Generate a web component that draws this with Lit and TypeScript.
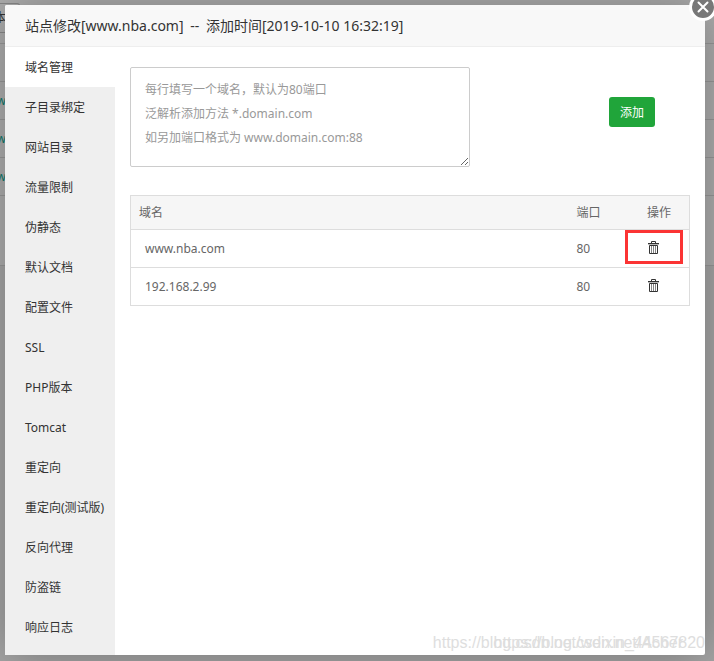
import { LitElement, html, css, svg } from "lit";
import { customElement, state } from "lit/decorators.js";

const TABS = [
  "域名管理", "子目录绑定", "网站目录", "流量限制", "伪静态", "默认文档", "配置文件", "SSL",
  "PHP版本", "Tomcat", "重定向", "重定向(测试版)", "反向代理", "防盗链", "响应日志",
];

const DOMAINS = [
  { name: "www.nba.com", port: 80, marked: true },
  { name: "192.168.2.99", port: 80, marked: false },
];

const trash = svg`<svg width="11" height="13" viewBox="0 0 11 13" fill="none" stroke="currentColor" aria-hidden="true">
  <path d="M3.5 2V.5h4V2M0 2.5h11" />
  <path d="M0 3.5h11" opacity=".35" />
  <path d="M1.5 4.5h8v8h-8z" />
  <path d="M3.5 5v7M5.5 5v7M7.5 5v7" opacity=".6" />
</svg>`;

@customElement("app-root")
export class AppRoot extends LitElement {
  @state() private active = 0;

  static styles = css`
    :host {
      display: block;
      position: relative;
      box-sizing: border-box;
      min-height: 100vh;
      padding: 5px 9px 6px 5px;
      overflow: hidden;
      background: #a6a6a6;
      color: #333;
      font: 12px/20px "Noto Sans", "Noto Sans CJK SC", sans-serif;
    }
    * { box-sizing: border-box; }
    button { font: inherit; cursor: pointer; }
    .behind { position: absolute; inset: 0; color: #0c7a6c; }
    .sheet { background: #aeaeae; }
    .bar { height: 44px; padding-top: 3px; border-bottom: 1px solid #989898; }
    .site-type { width: 20px; height: 30px; border: 1px solid #888; border-left: 0; border-radius: 0 3px 3px 0; line-height: 28px; color: #333; }
    .site-type span, .line span { display: flex; justify-content: flex-end; width: 6px; }
    .line { height: 38px; border-bottom: 1px solid #989898; line-height: 38px; }
    .foot { height: 70px; border-bottom: 1px solid #989898; }
    .dialog {
      position: relative;
      display: flex;
      flex-direction: column;
      min-height: calc(100vh - 11px);
      border-radius: 2px;
      background: #fff;
      box-shadow: 1px 1px 50px rgba(0, 0, 0, 0.3);
    }
    .title {
      margin: 0;
      height: 42px;
      padding: 0 20px;
      border-bottom: 1px solid #eee;
      border-radius: 2px 2px 0 0;
      background: #f8f8f8;
      font-size: 14px;
      font-weight: 400;
      line-height: 42px;
    }
    .dash { margin: 0 3px; }
    .close {
      position: absolute;
      top: -12px;
      right: -12px;
      width: 28px;
      height: 28px;
      padding: 0;
      border: 3px solid #fff;
      border-radius: 50%;
      background: #787878;
      color: #fff;
    }
    .close svg { display: block; margin: auto; }
    .body { display: flex; flex: 1; }
    .tabs { width: 110px; flex: none; background: #efefef; }
    .tab {
      display: block;
      width: 100%;
      height: 40px;
      padding: 2px 0 0 20px;
      border: 0;
      background: none;
      color: inherit;
      text-align: left;
      white-space: nowrap;
    }
    .tab[aria-selected="true"] { background: #fff; }
    .content { flex: 1; min-width: 0; padding: 20px 15px; }
    .add { display: flex; align-items: flex-start; justify-content: space-between; margin-bottom: 28px; }
    .domains {
      display: block;
      width: 340px;
      height: 100px;
      padding: 10px 14px;
      border: 1px solid #ccc;
      border-radius: 2px;
      outline: 0;
      background: #fff;
      color: #555;
      font: inherit;
      line-height: 24px;
      resize: both;
    }
    .domains::placeholder { color: #999; opacity: 1; }
    .submit {
      height: 30px;
      margin: 30px 35px 0 0;
      padding: 2px 11px 0;
      border: 0;
      border-radius: 3px;
      background: #20a53a;
      color: #fff;
    }
    table { width: 100%; border-collapse: collapse; border: 1px solid #ddd; table-layout: fixed; color: #666; }
    th { height: 34px; padding: 0 8px; background: #f6f6f6; font-weight: 400; text-align: left; }
    td { height: 38px; padding: 0 8px 0 14px; border-top: 1px solid #ddd; }
    .port { width: 56px; padding: 0 8px; }
    th.act { width: 65px; padding: 0 18px 0 0; text-align: right; }
    td.act { padding: 0; vertical-align: top; }
    .del {
      display: flex;
      align-items: center;
      justify-content: center;
      width: 58px;
      height: 34px;
      padding: 0;
      border: 3px solid transparent;
      background: none;
      color: #333;
    }
    .del.marked { border-color: #fb3434; }
    .mark {
      position: absolute;
      right: 0;
      bottom: 0;
      color: #dedede;
      font: 16px/24px "Liberation Sans", sans-serif;
      white-space: nowrap;
      pointer-events: none;
    }
    .mark.second { right: 22px; }
  `;

  render() {
    return html`
      <div class="behind" aria-hidden="true">
        <div class="sheet">
          <div class="bar"><div class="site-type"><span>本</span></div></div>
          <div class="line"></div>
          ${[0, 1, 2].map(() => html`<div class="line"><span>w</span></div>`)}
          <div class="foot"></div>
        </div>
      </div>
      <section class="dialog" role="dialog" aria-labelledby="title">
        <h1 class="title" id="title">站点修改[www.nba.com] <span class="dash">--</span> 添加时间[2019-10-10 16:32:19]</h1>
        <div class="body">
          <nav class="tabs" role="tablist">
            ${TABS.map((t, i) => html`<button class="tab" role="tab" aria-selected=${i === this.active ? "true" : "false"} @click=${() => (this.active = i)}>${t}</button>`)}
          </nav>
          <main class="content">
            <form class="add" @submit=${(e: Event) => e.preventDefault()}>
              <textarea class="domains" aria-label="域名" placeholder=${"每行填写一个域名，默认为80端口\n泛解析添加方法 *.domain.com\n如另加端口格式为 www.domain.com:88"}></textarea>
              <button class="submit">添加</button>
            </form>
            <table>
              <thead><tr><th>域名</th><th class="port">端口</th><th class="act">操作</th></tr></thead>
              <tbody>
                ${DOMAINS.map((d) => html`<tr>
                  <td>${d.name}</td><td class="port">${d.port}</td>
                  <td class="act"><button class="del ${d.marked ? "marked" : ""}" aria-label="删除 ${d.name}">${trash}</button></td>
                </tr>`)}
              </tbody>
            </table>
          </main>
        </div>
        <button class="close" aria-label="关闭">
          <svg width="12" height="12" viewBox="0 0 12 12" stroke="currentColor" stroke-width="2" stroke-linecap="round"><path d="M1.5 1.5l9 9M10.5 1.5l-9 9" /></svg>
        </button>
        <div class="mark">https://blog.csdn.net/weixin_44567820</div>
        <div class="mark second">https://blog.csdn.net/Acher</div>
      </section>
    `;
  }
}
